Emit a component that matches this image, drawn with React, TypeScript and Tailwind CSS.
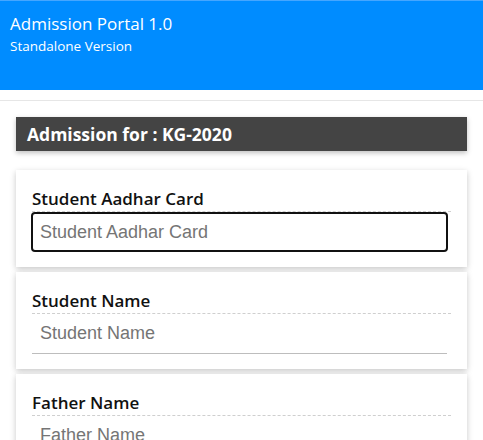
import React from 'react';

const fields = [
  { label: 'Student Aadhar Card', focused: true },
  { label: 'Student Name', focused: false },
  { label: 'Father Name', focused: false },
];

const FieldCard: React.FC<{ label: string; focused: boolean }> = ({ label, focused }) => {
  return (
    <div className="bg-white px-4 pt-[17px] pb-[15px] shadow-[0_2px_6px_rgba(0,0,0,0.22)]">
      <div className="border-b border-dashed border-[#cfcfcf] text-[17px] font-semibold leading-[24px] text-[#111]">
        {label}
      </div>
      <div className="pr-[4px]">
        {focused ? (
          <input
            placeholder={label}
            className="-mx-px block h-[40px] w-[calc(100%+2px)] rounded-[4px] border-2 border-[#111] px-[7px] font-['Liberation_Sans',Arial,sans-serif] text-[18px] outline-none placeholder:text-[#757575]"
          />
        ) : (
          <input
            placeholder={label}
            className="block h-[40px] w-full border-b border-[#bdbdbd] px-[8px] font-['Liberation_Sans',Arial,sans-serif] text-[18px] outline-none placeholder:text-[#757575]"
          />
        )}
      </div>
    </div>
  );
};

export default function App() {
  return (
    <div className="h-[440px] overflow-hidden bg-white font-['Open_Sans',sans-serif]">
      <header className="h-[90px] border-t border-[#45a6ff] bg-[#008cff] px-[10px] pt-[10px] text-white">
        <div className="text-[17px] leading-[25px]">Admission Portal 1.0</div>
        <div className="text-[13.5px] leading-[20px]">Standalone Version</div>
      </header>
      <div className="h-[11px] border-b border-[#e6e6e6]" />
      <main className="px-4 pt-[16px]">
        <div className="flex h-[34px] items-center bg-[#444444] px-[11px] text-[17.5px] font-bold text-white shadow-[0_2px_5px_rgba(0,0,0,0.25)]">
          Admission for : KG-2020
        </div>
        <div className="mt-[19px] flex flex-col gap-[5px]">
          {fields.map((f) => (
            <FieldCard key={f.label} label={f.label} focused={f.focused} />
          ))}
        </div>
      </main>
    </div>
  );
}
